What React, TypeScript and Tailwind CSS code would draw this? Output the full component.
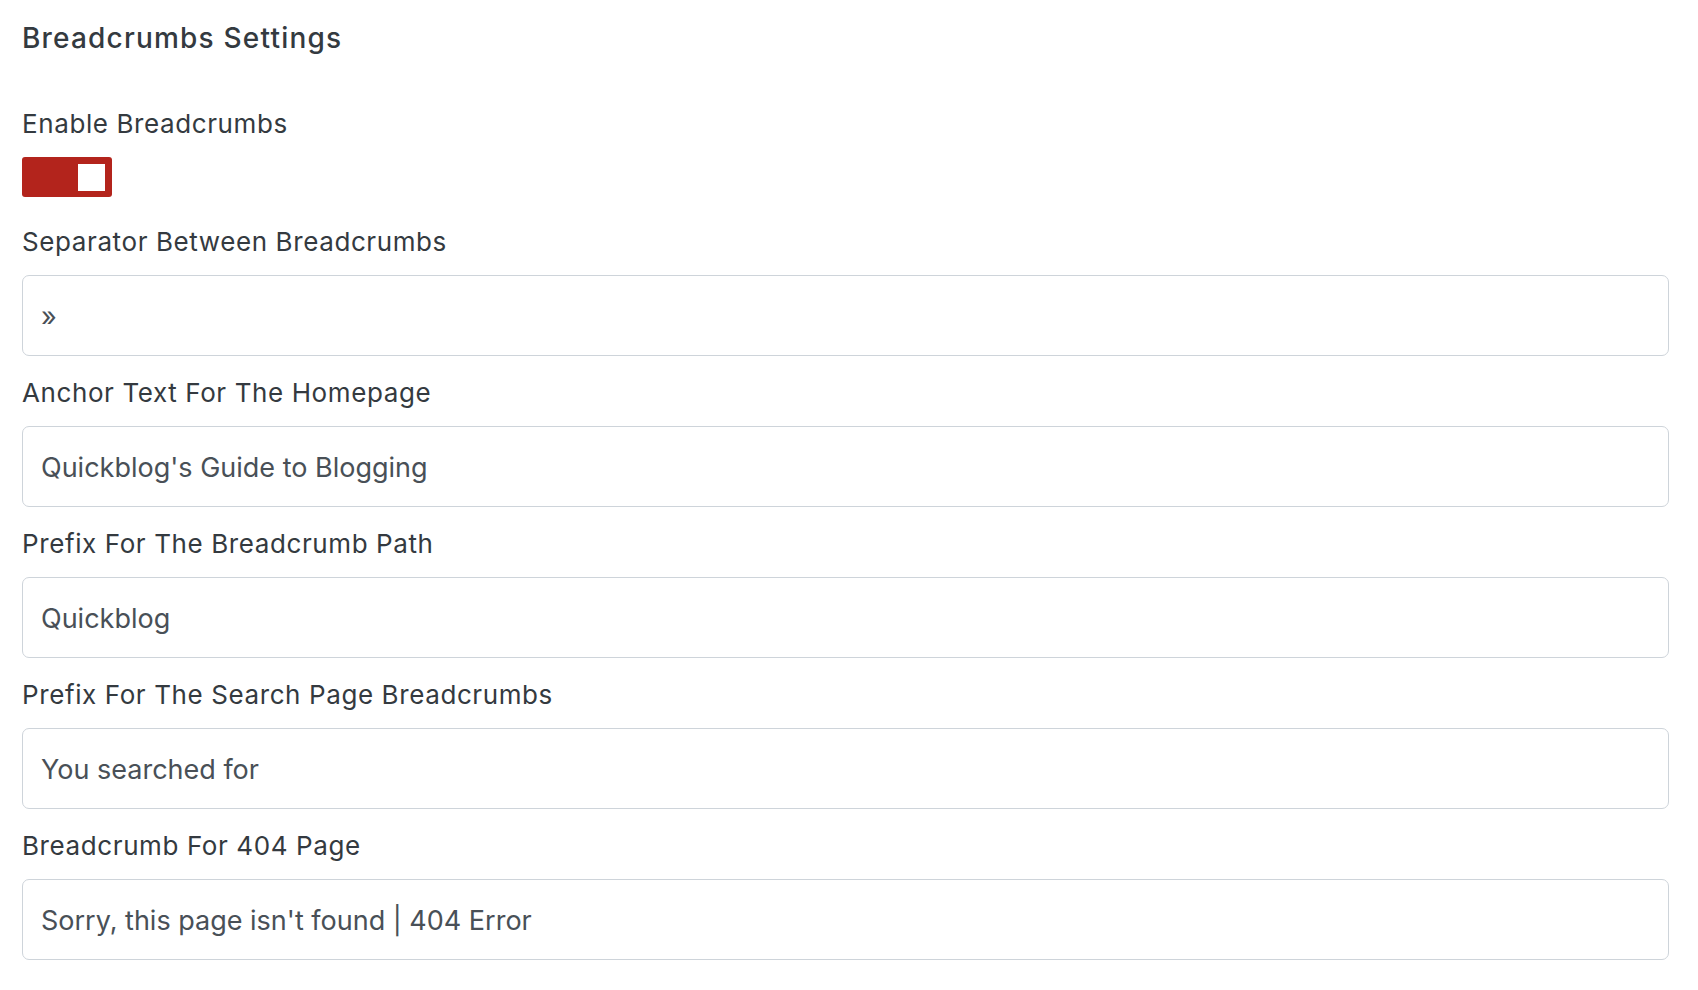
const fields = [
  { label: 'Separator Between Breadcrumbs', value: '»' },
  { label: 'Anchor Text For The Homepage', value: "Quickblog's Guide to Blogging" },
  { label: 'Prefix For The Breadcrumb Path', value: 'Quickblog' },
  { label: 'Prefix For The Search Page Breadcrumbs', value: 'You searched for' },
  { label: 'Breadcrumb For 404 Page', value: "Sorry, this page isn't found | 404 Error" },
];

const App = () => {
  return (
    <div className="min-h-screen bg-white pl-[22px] pr-[29px] pt-[20px] font-['Inter',sans-serif]">
      <h1 className="text-[28px] leading-[36px] font-medium tracking-[1.2px] text-[#343a40]">Breadcrumbs Settings</h1>

      <div className="mt-[49px]">
        <label className="block pt-[1px] text-[26px] leading-[35px] tracking-[0.6px] text-[#343a40]">Enable Breadcrumbs</label>
        <button className="mt-[16px] flex h-[40px] w-[90px] items-center justify-end rounded-[3px] bg-[#b3241c] pr-[7px]">
          <span className="block h-[27px] w-[27px] bg-white" />
        </button>
      </div>

      <div className="mt-[26px]">
        {fields.map((f) => (
          <div key={f.label} className="mb-[18px]">
            <label className="mb-[16px] block pt-[1px] text-[26px] leading-[35px] tracking-[0.6px] text-[#343a40]">
              {f.label}
            </label>
            <div className="flex h-[81px] items-center rounded-[7px] border border-[#ced4da] bg-white px-[18px] pt-[3px] text-[27px] text-[#495057]">
              {f.value}
            </div>
          </div>
        ))}
      </div>
    </div>
  );
};

export default App;
